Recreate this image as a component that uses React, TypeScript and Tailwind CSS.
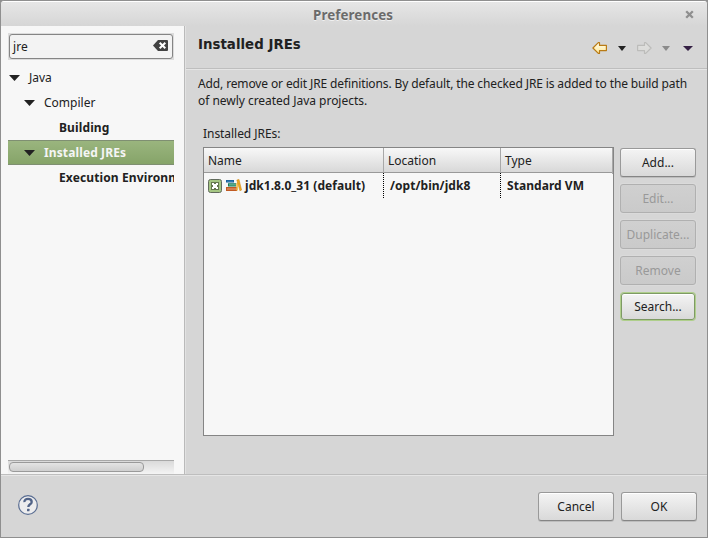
import React from 'react';

const FONT = "font-['Noto_Sans','Open_Sans',sans-serif]";

function Caret({ color = '#222222', width = 11, height = 6 }: { color?: string; width?: number; height?: number }) {
  return (
    <svg width={width} height={height} viewBox={`0 0 ${width} ${height}`} className="block shrink-0">
      <path d={`M0 0H${width}L${width / 2} ${height}Z`} fill={color} />
    </svg>
  );
}

function TreeRow({
  label,
  indent,
  caret = false,
  bold = false,
  selected = false,
}: {
  label: string;
  indent: string;
  caret?: boolean;
  bold?: boolean;
  selected?: boolean;
}) {
  return (
    <div
      className={`flex h-[25px] items-center whitespace-nowrap ${indent} ${bold ? 'font-bold tracking-[0.12px]' : ''} ${
        selected
          ? 'border-y border-[#7f8f72] bg-gradient-to-b from-[#9ab57e] to-[#86a469] text-[#f5f5f5]'
          : 'text-[#212121]'
      }`}
    >
      {caret && (
        <span className="mr-[9px]">
          <Caret />
        </span>
      )}
      <span className="leading-4">{label}</span>
    </div>
  );
}

function Button({ label, disabled = false, focused = false }: { label: string; disabled?: boolean; focused?: boolean }) {
  const look = disabled
    ? 'border-[#b0b0b0] bg-gradient-to-b from-[#d0d0d0] to-[#cacaca] text-[#999999] shadow-[0_0_0_1px_#dadada]'
    : focused
      ? 'border-[#7e9a64] bg-gradient-to-b from-[#f4f4f4] to-[#d9d9d9] text-[#212121] shadow-[0_0_0_1px_#afcf8b,inset_0_1px_0_#ffffff]'
      : 'border-[#999999] border-b-[#858585] bg-gradient-to-b from-[#f4f4f4] to-[#d9d9d9] text-[#212121] shadow-[0_1px_0_#bdbdbd,inset_0_1px_0_#ffffff]';
  return (
    <button
      className={`flex items-center justify-center rounded-[3px] border leading-4 ${look} ${
        focused ? 'm-px h-[27px] w-[74px]' : 'h-[29px] w-[76px]'
      }`}
    >
      {label}
    </button>
  );
}

function ClearIcon() {
  return (
    <svg width="15" height="11" viewBox="0 0 15 11" className="block">
      <path d="M0 5.5 5 0H14Q15 0 15 1V10Q15 11 14 11H5Z" fill="#424242" />
      <path d="m6.7 2.7 5.6 5.6m0-5.6-5.6 5.6" stroke="#fff" strokeWidth="2" />
    </svg>
  );
}

function ArrowIcon({ disabled = false, id }: { disabled?: boolean; id: string }) {
  return (
    <svg width="15" height="12" viewBox="0 0 15 12" className={`block ${disabled ? '-scale-x-100' : ''}`}>
      <defs>
        <linearGradient id={id} x1="0" y1="0" x2="0" y2="1">
          <stop offset="0" stopColor={disabled ? '#e0e0de' : '#fffef0'} />
          <stop offset="1" stopColor={disabled ? '#dadad8' : '#ffe794'} />
        </linearGradient>
      </defs>
      <path
        d="M.9 6 6.3.6H7.5V3.4H14.4V8.6H7.5V11.4H6.3Z"
        fill={`url(#${id})`}
        stroke={disabled ? '#bcbcba' : '#b97b16'}
        strokeWidth="1.2"
        strokeLinejoin="round"
      />
    </svg>
  );
}

function CheckMark() {
  return (
    <svg width="14" height="14" viewBox="0 0 14 14" className="block shrink-0">
      <rect x=".5" y=".5" width="13" height="13" rx="2" fill="#a5c683" stroke="#626b5d" />
      <rect x="3" y="3" width="8" height="8" fill="#66784f" />
      <path d="M4 4h2v1h2V4h2v2H9v2h1v2H8V9H6v1H4V8h1V6H4Z" fill="#fff" />
    </svg>
  );
}

function LibraryIcon() {
  return (
    <svg width="16" height="13" viewBox="0 0 16 13" className="block shrink-0">
      <path d="M0 1H8V3.6H0Z" fill="#17609c" />
      <path d="M1 2.3H7" stroke="#4c9acb" strokeWidth=".6" />
      <path d="M2 4.3H10V7.4H2Z" fill="#137a5a" />
      <path d="M3 5.9H10" stroke="#8fd0ae" strokeWidth=".9" />
      <path d="M0 8H11V12H0Z" fill="#c05a24" />
      <path d="M1 10H11" stroke="#e8a27d" />
      <path d="M10.3 4.2 11.8 3V11.5H10.3Z" fill="#f2b233" />
      <path d="M10.8 1 13 .4 15.6 11 13.9 11.8Z" fill="#eda622" stroke="#cf8510" strokeWidth=".5" />
    </svg>
  );
}

function HelpIcon() {
  return (
    <svg width="20" height="20" viewBox="0 0 20 20" className="block">
      <circle cx="10" cy="10" r="9.3" fill="#ededee" stroke="#596d92" strokeWidth="1.2" />
      <path
        d="M6.4 7.1C6.3 4.6 8 3.9 10 3.9s3.7 1 3.7 3c0 2.5-3.4 2.3-3.4 5.1"
        fill="none"
        stroke="#526488"
        strokeWidth="2.3"
      />
      <rect x="9" y="13.8" width="2.5" height="2.4" rx=".5" fill="#526488" />
    </svg>
  );
}

export default function App() {
  return (
    <div className="h-[538px] w-[708px] bg-[#8f8f8f]">
      <div
        className={`flex h-[538px] w-[708px] flex-col overflow-hidden rounded-t-[4px] border border-[#8f8f8f] bg-[#d6d6d6] text-[12px] text-[#212121] ${FONT}`}
      >
        <header className="flex h-[25px] shrink-0 items-center border-t border-white bg-gradient-to-b from-[#e6e6e6] to-[#d6d6d6] pr-[13px] pl-5">
          <h1 className="flex-1 pt-[2px] text-center text-[13.33px] leading-5 font-bold tracking-[0.1px] text-[#6b6b6b] [text-shadow:0_1px_0_#f0f0f0]">
            Preferences
          </h1>
          <svg width="9" height="9" viewBox="0 0 9 9" className="block">
            <path d="m1.2 1.2 6.6 6.6m0-6.6L1.2 7.8" stroke="#8f8f8f" strokeWidth="2.3" />
          </svg>
        </header>

        <div className="flex h-[448px] shrink-0">
          <aside className="flex w-[183px] shrink-0 flex-col bg-[#f7f7f7] pt-[7px] pl-[7px]">
            <div className="h-[27px] w-[166px] bg-[#dcdcdc] p-px">
              <div className="flex h-[25px] items-center justify-between rounded-[3px] border border-[#858585] bg-[#f3f3f3] pr-1 pl-[3px]">
                <span className="leading-4 tracking-[0.15px]">jre</span>
                <span className="-mt-[2px]">
                  <ClearIcon />
                </span>
              </div>
            </div>
            <nav className="mt-[5px] w-[166px] flex-1 overflow-hidden">
              <TreeRow label="Java" indent="pl-px" caret />
              <TreeRow label="Compiler" indent="pl-4" caret />
              <TreeRow label="Building" indent="pl-[51px]" bold />
              <TreeRow label="Installed JREs" indent="pl-4" caret bold selected />
              <TreeRow label="Execution Environments" indent="pl-[51px]" bold />
            </nav>
            <div className="h-[14px] w-[166px] border-t border-[#a8a8a8] bg-gradient-to-b from-[#dadada] to-[#f4f4f4] pt-px pl-px">
              <div className="h-[10px] w-[135px] rounded-[4px] border border-[#9a9a9a] bg-gradient-to-b from-[#e4e4e4] to-[#cfcfcf]" />
            </div>
          </aside>

          <main className="flex flex-1 flex-col border-l border-[#bababa] shadow-[inset_1px_0_0_#e2e2e2]">
            <div className="ml-px flex h-[43px] shrink-0 items-start justify-between border-b border-[#bebebe] pr-[14px] pl-[12px] shadow-[0_1px_0_#e5e5e5]">
              <h2 className="pt-[9px] font-['DejaVu_Sans',sans-serif] text-[13.33px] leading-5 font-bold tracking-[0.03px]">
                Installed JREs
              </h2>
              <div className="flex items-center pt-4">
                <ArrowIcon id="back" />
                <span className="ml-[11px]">
                  <Caret width={8} height={5} />
                </span>
                <span className="ml-[11px]">
                  <ArrowIcon id="forward" disabled />
                </span>
                <span className="ml-[10px]">
                  <Caret width={8} height={5} color="#8b8b8b" />
                </span>
                <span className="ml-[13px]">
                  <Caret width={10} height={5} color="#352044" />
                </span>
              </div>
            </div>
            <p className="mt-[6px] pl-[13px] leading-[17px] whitespace-nowrap">
              <span className="tracking-[-0.125px]">
                Add, remove or edit JRE definitions. By default, the checked JRE is added to the build path
              </span>
              <br />
              <span className="tracking-[-0.03px]">of newly created Java projects.</span>
            </p>
            <p className="mt-4 pl-[18px] leading-[17px] tracking-[-0.05px]">Installed JREs:</p>
            <div className="mt-[5px] flex pl-[18px]">
              <div className="h-[289px] w-[411px] border border-[#858585] bg-[#f7f7f7]">
                <div className="grid h-[25px] grid-cols-[180px_117px_1fr] border-b border-[#999999] bg-gradient-to-b from-[#f8f8f8] to-[#d8d8d8] leading-[26px]">
                  <div className="border-r border-[#a8a8a8] pl-1">Name</div>
                  <div className="border-r border-[#a8a8a8] pl-1">Location</div>
                  <div className="border-r border-[#a8a8a8] pl-1">Type</div>
                </div>
                <div className="grid h-[25px] grid-cols-[180px_117px_1fr] leading-[25px] font-bold tracking-[0.05px]">
                  <div className="flex items-center pl-1">
                    <CheckMark />
                    <span className="ml-1">
                      <LibraryIcon />
                    </span>
                    <span className="ml-[3px]">jdk1.8.0_31 (default)</span>
                  </div>
                  <div className="-ml-px border-l border-dotted border-black pl-[6px]">/opt/bin/jdk8</div>
                  <div className="-ml-px border-l border-dotted border-black pl-[6px]">Standard VM</div>
                </div>
              </div>
              <div className="ml-[6px] flex flex-col gap-[7px] pt-px">
                <Button label="Add..." />
                <Button label="Edit..." disabled />
                <Button label="Duplicate..." disabled />
                <Button label="Remove" disabled />
                <Button label="Search..." focused />
              </div>
            </div>
          </main>
        </div>

        <footer className="flex flex-1 items-start border-t border-[#bebebe] pt-[17px] pr-[10px] pl-[17px] shadow-[inset_0_1px_0_#e5e5e5]">
          <div className="mt-[3px] flex-1">
            <HelpIcon />
          </div>
          <div className="flex gap-[7px]">
            <Button label="Cancel" />
            <Button label="OK" />
          </div>
        </footer>
      </div>
    </div>
  );
}
